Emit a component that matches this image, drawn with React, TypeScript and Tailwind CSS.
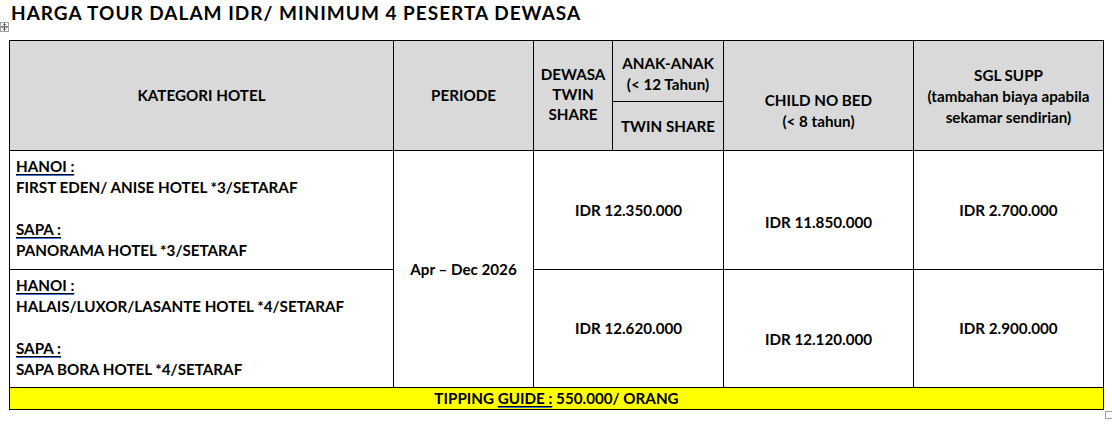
import React from 'react';

function Label({ children }: { children: React.ReactNode }) {
  return (
    <span className="inline-block leading-[15px] border-b-2 border-[#3f6fd8]">
      <span className="underline decoration-black decoration-1 underline-offset-[2px]">{children}</span>
    </span>
  );
}

function HotelCell({ city1, hotel1, city2, hotel2, row }: { city1: string; hotel1: string; city2: string; hotel2: string; row: string }) {
  return (
    <div className={`col-start-1 ${row} border-r border-b border-black pl-[6px] pt-[5px] leading-[21px] text-left`}>
      <div><Label>{city1}</Label></div>
      <div>{hotel1}</div>
      <div>&nbsp;</div>
      <div><Label>{city2}</Label></div>
      <div>{hotel2}</div>
    </div>
  );
}

export default function App() {
  return (
    <main className="w-[1112px] h-[426px] bg-white text-black font-bold relative overflow-hidden font-[family-name:Lato,sans-serif]">
      <h1 className="pl-[11px] pt-[1px] text-[19px] leading-[24px] tracking-[1px] font-bold">HARGA TOUR DALAM IDR/ MINIMUM 4 PESERTA DEWASA</h1>

      {/* table move handle */}
      <div className="absolute left-0 top-[22px] w-[9px] h-[10px] border border-[#a0a0a0] bg-white flex items-center justify-center">
        <svg width="7" height="8" viewBox="0 0 7 8" fill="none" stroke="#444" strokeWidth="0.9">
          <path d="M3.5 0.5v7M0.5 4h6M2.3 1.7l1.2-1.2 1.2 1.2M2.3 6.3l1.2 1.2 1.2-1.2M5.3 2.8l1.2 1.2-1.2 1.2M1.7 2.8L0.5 4l1.2 1.2" />
        </svg>
      </div>

      <div className="ml-[9px] mt-[15px] w-[1095px] grid grid-cols-[384px_140px_79px_111px_190px_190px] grid-rows-[61px_49px_119px_118px_22px] border-l border-t border-black text-[15.2px] text-center">
        <div className="col-start-1 row-start-1 row-span-2 bg-[#d9d9d9] border-r border-b border-black flex items-center justify-center">KATEGORI HOTEL</div>
        <div className="col-start-2 row-start-1 row-span-2 bg-[#d9d9d9] border-r border-b border-black flex items-center justify-center">PERIODE</div>
        <div className="col-start-3 row-start-1 row-span-2 bg-[#d9d9d9] border-r border-b border-black flex items-center justify-center leading-[20px] pb-[4px]">
          <div>DEWASA<br />TWIN<br />SHARE</div>
        </div>
        <div className="col-start-4 row-start-1 bg-[#d9d9d9] border-r border-b border-black flex items-center justify-center leading-[21px] pt-[6px]">
          <div>ANAK-ANAK<br />(&lt; 12 Tahun)</div>
        </div>
        <div className="col-start-4 row-start-2 bg-[#d9d9d9] border-r border-b border-black flex items-center justify-center">TWIN SHARE</div>
        <div className="col-start-5 row-start-1 row-span-2 bg-[#d9d9d9] border-r border-b border-black flex items-center justify-center leading-[21px] pt-[30px]">
          <div>CHILD NO BED<br />(&lt; 8 tahun)</div>
        </div>
        <div className="col-start-6 row-start-1 row-span-2 bg-[#d9d9d9] border-r border-b border-black flex items-center justify-center leading-[21px] pt-[2px]">
          <div>SGL SUPP<br />(tambahan biaya apabila<br />sekamar sendirian)</div>
        </div>

        <HotelCell row="row-start-3" city1="HANOI :" hotel1="FIRST EDEN/ ANISE HOTEL *3/SETARAF" city2="SAPA :" hotel2="PANORAMA HOTEL *3/SETARAF" />
        <div className="col-start-2 row-start-3 row-span-2 border-r border-b border-black flex items-center justify-center">Apr – Dec 2026</div>
        <div className="col-start-3 col-span-2 row-start-3 border-r border-b border-black flex items-center justify-center">IDR 12.350.000</div>
        <div className="col-start-5 row-start-3 border-r border-b border-black flex items-center justify-center pt-[24px]">IDR 11.850.000</div>
        <div className="col-start-6 row-start-3 border-r border-b border-black flex items-center justify-center">IDR 2.700.000</div>

        <HotelCell row="row-start-4" city1="HANOI :" hotel1="HALAIS/LUXOR/LASANTE HOTEL *4/SETARAF" city2="SAPA :" hotel2="SAPA BORA HOTEL *4/SETARAF" />
        <div className="col-start-3 col-span-2 row-start-4 border-r border-b border-black flex items-center justify-center">IDR 12.620.000</div>
        <div className="col-start-5 row-start-4 border-r border-b border-black flex items-center justify-center pt-[22px]">IDR 12.120.000</div>
        <div className="col-start-6 row-start-4 border-r border-b border-black flex items-center justify-center">IDR 2.900.000</div>

        <div className="col-start-1 col-span-6 row-start-5 bg-[#ffff00] border-r border-b border-black flex items-center justify-center">
          <span>TIPPING <Label>GUIDE :</Label> 550.000/ ORANG</span>
        </div>
      </div>

      {/* table resize handle */}
      <div className="absolute left-[1105px] top-[411px] w-[8px] h-[8px] border border-[#a0a0a0] bg-white" />
    </main>
  );
}
